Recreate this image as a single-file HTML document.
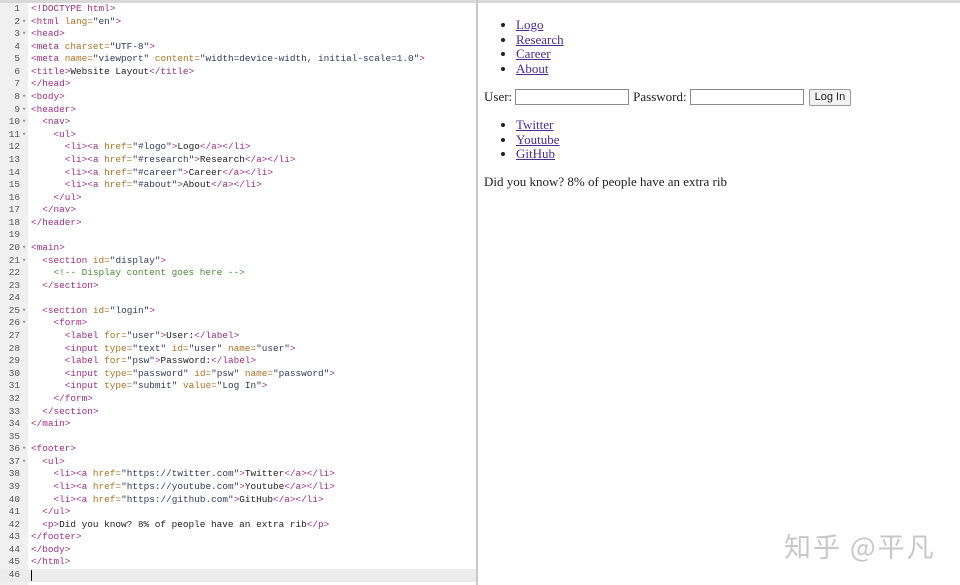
<!DOCTYPE html>
<html><head><meta charset="utf-8"><style>
body{margin:0;width:960px;height:585px;background:#fff;position:relative;overflow:hidden;font-family:"Liberation Serif",serif}
#top{position:absolute;left:0;top:0;width:960px;height:3px;background:#d8d8d8}
#gut{position:absolute;left:0;top:3px;width:28px;height:582px;background:#f0f0f0}
#code{position:absolute;left:0;top:3px;width:476px;font-family:"Liberation Mono",monospace;font-size:9.4px;color:#222}
.l{height:12.58px;line-height:12.58px;white-space:pre;position:relative}
.n{position:absolute;left:0;width:20px;text-align:right;color:#555}
.f{position:absolute;left:22px;color:#888;font-size:7px}
.c{position:absolute;left:31px}
.t{color:#9a2f86}.a{color:#a8742a}.s{color:#333a5a}.cm{color:#4c8c3c}
.cur{background:#ececec}
#div{position:absolute;left:476px;top:0;width:2px;height:585px;background:#c8c8c8}
#r{position:absolute;left:484px;top:18px;font-size:13px;color:#222}
#r ul{margin:0;padding-left:32px;list-style:disc}
#r li{height:14.5px;line-height:14.5px}
#r a{color:#4a2c8c;text-decoration:underline}
.row{margin:12px 0 12px;height:18px;display:flex;align-items:center}
.in{width:112px;height:14px;border:1px solid #888;margin:0 4px 0 3px}
.btn{height:15px;border:1px solid #999;background:#f2f2f2;border-radius:2px;font-family:"Liberation Sans",sans-serif;font-size:11px;padding:0 5px;line-height:15px;margin-left:1px}
#wm{position:absolute;left:784px;top:526px;font-family:"Noto Sans CJK SC",sans-serif;font-size:27px;color:#c8c8c8;letter-spacing:2px}
</style></head><body>
<div id="top"></div><div id="gut"></div>
<div id="code">
<div class="l"><span class="n">1</span><span class="c"><span class="t">&lt;!DOCTYPE html&gt;</span></span></div>
<div class="l"><span class="n">2</span><span class="f">▾</span><span class="c"><span class="t">&lt;html</span> <span class="a">lang=</span><span class="s">"en"</span><span class="t">&gt;</span></span></div>
<div class="l"><span class="n">3</span><span class="f">▾</span><span class="c"><span class="t">&lt;head&gt;</span></span></div>
<div class="l"><span class="n">4</span><span class="c"><span class="t">&lt;meta</span> <span class="a">charset=</span><span class="s">"UTF-8"</span><span class="t">&gt;</span></span></div>
<div class="l"><span class="n">5</span><span class="c"><span class="t">&lt;meta</span> <span class="a">name=</span><span class="s">"viewport"</span> <span class="a">content=</span><span class="s">"width=device-width, initial-scale=1.0"</span><span class="t">&gt;</span></span></div>
<div class="l"><span class="n">6</span><span class="c"><span class="t">&lt;title&gt;</span>Website Layout<span class="t">&lt;/title&gt;</span></span></div>
<div class="l"><span class="n">7</span><span class="c"><span class="t">&lt;/head&gt;</span></span></div>
<div class="l"><span class="n">8</span><span class="f">▾</span><span class="c"><span class="t">&lt;body&gt;</span></span></div>
<div class="l"><span class="n">9</span><span class="f">▾</span><span class="c"><span class="t">&lt;header&gt;</span></span></div>
<div class="l"><span class="n">10</span><span class="f">▾</span><span class="c">  <span class="t">&lt;nav&gt;</span></span></div>
<div class="l"><span class="n">11</span><span class="f">▾</span><span class="c">    <span class="t">&lt;ul&gt;</span></span></div>
<div class="l"><span class="n">12</span><span class="c">      <span class="t">&lt;li&gt;&lt;a</span> <span class="a">href=</span><span class="s">"#logo"</span><span class="t">&gt;</span>Logo<span class="t">&lt;/a&gt;&lt;/li&gt;</span></span></div>
<div class="l"><span class="n">13</span><span class="c">      <span class="t">&lt;li&gt;&lt;a</span> <span class="a">href=</span><span class="s">"#research"</span><span class="t">&gt;</span>Research<span class="t">&lt;/a&gt;&lt;/li&gt;</span></span></div>
<div class="l"><span class="n">14</span><span class="c">      <span class="t">&lt;li&gt;&lt;a</span> <span class="a">href=</span><span class="s">"#career"</span><span class="t">&gt;</span>Career<span class="t">&lt;/a&gt;&lt;/li&gt;</span></span></div>
<div class="l"><span class="n">15</span><span class="c">      <span class="t">&lt;li&gt;&lt;a</span> <span class="a">href=</span><span class="s">"#about"</span><span class="t">&gt;</span>About<span class="t">&lt;/a&gt;&lt;/li&gt;</span></span></div>
<div class="l"><span class="n">16</span><span class="c">    <span class="t">&lt;/ul&gt;</span></span></div>
<div class="l"><span class="n">17</span><span class="c">  <span class="t">&lt;/nav&gt;</span></span></div>
<div class="l"><span class="n">18</span><span class="c"><span class="t">&lt;/header&gt;</span></span></div>
<div class="l"><span class="n">19</span></div>
<div class="l"><span class="n">20</span><span class="f">▾</span><span class="c"><span class="t">&lt;main&gt;</span></span></div>
<div class="l"><span class="n">21</span><span class="f">▾</span><span class="c">  <span class="t">&lt;section</span> <span class="a">id=</span><span class="s">"display"</span><span class="t">&gt;</span></span></div>
<div class="l"><span class="n">22</span><span class="c">    <span class="cm">&lt;!-- Display content goes here --&gt;</span></span></div>
<div class="l"><span class="n">23</span><span class="c">  <span class="t">&lt;/section&gt;</span></span></div>
<div class="l"><span class="n">24</span></div>
<div class="l"><span class="n">25</span><span class="f">▾</span><span class="c">  <span class="t">&lt;section</span> <span class="a">id=</span><span class="s">"login"</span><span class="t">&gt;</span></span></div>
<div class="l"><span class="n">26</span><span class="f">▾</span><span class="c">    <span class="t">&lt;form&gt;</span></span></div>
<div class="l"><span class="n">27</span><span class="c">      <span class="t">&lt;label</span> <span class="a">for=</span><span class="s">"user"</span><span class="t">&gt;</span>User:<span class="t">&lt;/label&gt;</span></span></div>
<div class="l"><span class="n">28</span><span class="c">      <span class="t">&lt;input</span> <span class="a">type=</span><span class="s">"text"</span> <span class="a">id=</span><span class="s">"user"</span> <span class="a">name=</span><span class="s">"user"</span><span class="t">&gt;</span></span></div>
<div class="l"><span class="n">29</span><span class="c">      <span class="t">&lt;label</span> <span class="a">for=</span><span class="s">"psw"</span><span class="t">&gt;</span>Password:<span class="t">&lt;/label&gt;</span></span></div>
<div class="l"><span class="n">30</span><span class="c">      <span class="t">&lt;input</span> <span class="a">type=</span><span class="s">"password"</span> <span class="a">id=</span><span class="s">"psw"</span> <span class="a">name=</span><span class="s">"password"</span><span class="t">&gt;</span></span></div>
<div class="l"><span class="n">31</span><span class="c">      <span class="t">&lt;input</span> <span class="a">type=</span><span class="s">"submit"</span> <span class="a">value=</span><span class="s">"Log In"</span><span class="t">&gt;</span></span></div>
<div class="l"><span class="n">32</span><span class="c">    <span class="t">&lt;/form&gt;</span></span></div>
<div class="l"><span class="n">33</span><span class="c">  <span class="t">&lt;/section&gt;</span></span></div>
<div class="l"><span class="n">34</span><span class="c"><span class="t">&lt;/main&gt;</span></span></div>
<div class="l"><span class="n">35</span></div>
<div class="l"><span class="n">36</span><span class="f">▾</span><span class="c"><span class="t">&lt;footer&gt;</span></span></div>
<div class="l"><span class="n">37</span><span class="f">▾</span><span class="c">  <span class="t">&lt;ul&gt;</span></span></div>
<div class="l"><span class="n">38</span><span class="c">    <span class="t">&lt;li&gt;&lt;a</span> <span class="a">href=</span><span class="s">"https://twitter.com"</span><span class="t">&gt;</span>Twitter<span class="t">&lt;/a&gt;&lt;/li&gt;</span></span></div>
<div class="l"><span class="n">39</span><span class="c">    <span class="t">&lt;li&gt;&lt;a</span> <span class="a">href=</span><span class="s">"https://youtube.com"</span><span class="t">&gt;</span>Youtube<span class="t">&lt;/a&gt;&lt;/li&gt;</span></span></div>
<div class="l"><span class="n">40</span><span class="c">    <span class="t">&lt;li&gt;&lt;a</span> <span class="a">href=</span><span class="s">"https://github.com"</span><span class="t">&gt;</span>GitHub<span class="t">&lt;/a&gt;&lt;/li&gt;</span></span></div>
<div class="l"><span class="n">41</span><span class="c">  <span class="t">&lt;/ul&gt;</span></span></div>
<div class="l"><span class="n">42</span><span class="c">  <span class="t">&lt;p&gt;</span>Did you know? 8% of people have an extra rib<span class="t">&lt;/p&gt;</span></span></div>
<div class="l"><span class="n">43</span><span class="c"><span class="t">&lt;/footer&gt;</span></span></div>
<div class="l"><span class="n">44</span><span class="c"><span class="t">&lt;/body&gt;</span></span></div>
<div class="l"><span class="n">45</span><span class="c"><span class="t">&lt;/html&gt;</span></span></div>
<div class="l cur"><span class="n">46</span><span class="c" style="border-left:1.5px solid #000;height:11px;top:1px"></span></div>
</div>
<div id="div"></div>
<div id="r">
<ul><li><a>Logo</a></li><li><a>Research</a></li><li><a>Career</a></li><li><a>About</a></li></ul>
<div class="row">User:<span class="in"></span>Password:<span class="in"></span><span class="btn">Log In</span></div>
<ul><li><a>Twitter</a></li><li><a>Youtube</a></li><li><a>GitHub</a></li></ul>
<p style="margin:12px 0 0">Did you know? 8% of people have an extra rib</p>
</div>
<div id="wm">知乎 @平凡</div>
</body></html>
